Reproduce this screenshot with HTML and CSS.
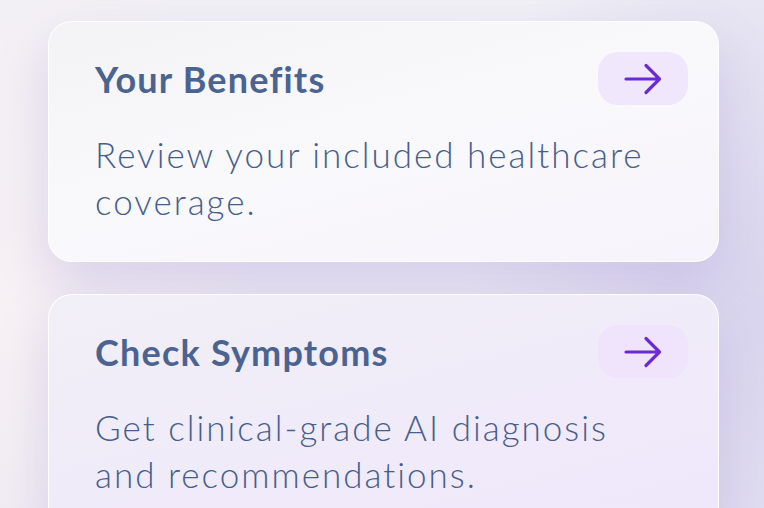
FILE: index.html
```html
<!DOCTYPE html>
<html lang="en">
<head>
  <meta charset="UTF-8">
  <meta name="viewport" content="width=device-width, initial-scale=1.0">
  <title>Health Hub</title>
  <link rel="stylesheet" href="styles.css">
</head>
<body>
  <main class="cards">
    <a class="card card-benefits" href="#benefits">
      <div class="card-head">
        <h2>Your Benefits</h2>
        <span class="go">
          <svg width="38" height="32" viewBox="0 0 38 32" fill="none" stroke="currentColor" stroke-width="3.2" stroke-linecap="round" stroke-linejoin="round">
            <path d="M2 16H35M22 2.5L35.5 16L22 29.5"/>
          </svg>
        </span>
      </div>
      <p>Review your included healthcare coverage.</p>
    </a>

    <a class="card card-symptoms" href="#symptoms">
      <div class="card-head">
        <h2>Check Symptoms</h2>
        <span class="go">
          <svg width="38" height="32" viewBox="0 0 38 32" fill="none" stroke="currentColor" stroke-width="3.2" stroke-linecap="round" stroke-linejoin="round">
            <path d="M2 16H35M22 2.5L35.5 16L22 29.5"/>
          </svg>
        </span>
      </div>
      <p>Get clinical-grade AI diagnosis and recommendations.</p>
    </a>
  </main>
</body>
</html>
```

FILE: styles.css
```css
body {
  margin: 0;
  height: 508px;
  overflow: hidden;
  font-family: Lato, "Open Sans", sans-serif;
  background:
    radial-gradient(ellipse 260px 420px at 0% 60%, #f8f1f4 0%, rgba(248, 241, 244, 0) 100%),
    radial-gradient(ellipse 300px 500px at 100% 60%, #d9d5ee 0%, rgba(217, 213, 238, 0) 100%),
    linear-gradient(180deg, #f1f0f5 0%, #e9e6f2 100%);
}

.cards { padding: 21px 45px 0 48px; display: flex; flex-direction: column; gap: 32px; }

.card {
  display: block;
  text-decoration: none;
  border-radius: 24px;
  border: 1.5px solid rgba(255, 255, 255, 0.95);
  padding: 30px 30px 36px 46px;
  box-shadow: 0 22px 50px rgba(130, 110, 200, 0.22);
  color: #4b6390;
}
.card-benefits { background: linear-gradient(165deg, #f3f3f6 0%, #f9f9fb 45%, #f7f3fc 100%); }
.card-symptoms { background: linear-gradient(165deg, #f1eff6 0%, #f0ebf9 50%, #efe7fb 100%); }

.card-head { display: flex; align-items: center; justify-content: space-between; }
.card h2 { margin: 0; font-size: 36px; font-weight: 700; letter-spacing: 1.2px; }

.go {
  width: 90px;
  height: 53px;
  border-radius: 20px;
  background: #f1e7fd;
  color: #6a2bcf;
  display: flex;
  align-items: center;
  justify-content: center;
}
.card-symptoms .go { background: #efe4fb; }

.card p { margin: 26px 0 0; font-size: 35px; line-height: 47px; font-weight: 300; letter-spacing: 2px; width: 560px; color: #465e8d; }
```
